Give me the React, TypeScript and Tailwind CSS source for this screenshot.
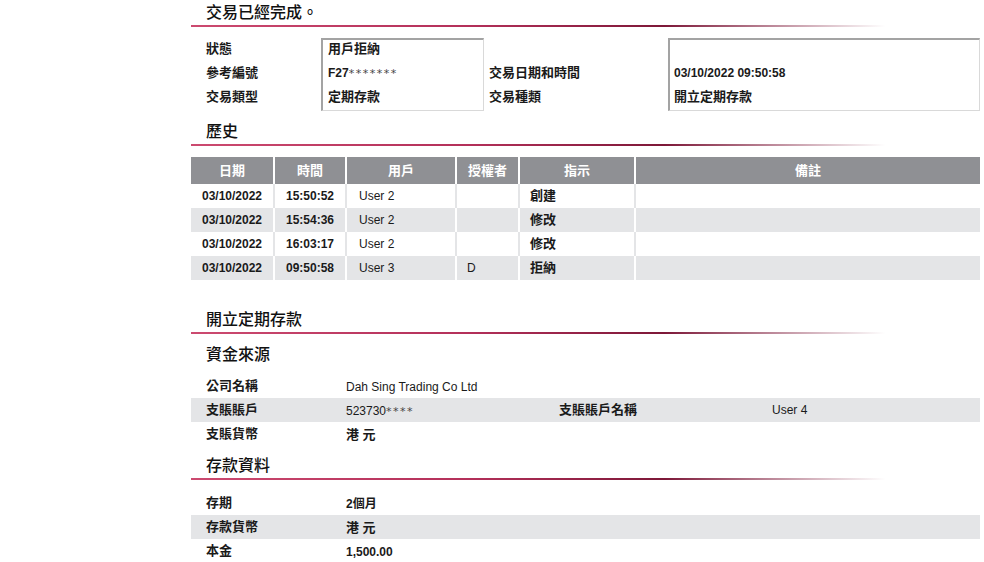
import React from "react";

const LINE =
  "h-[2px] bg-[linear-gradient(to_right,#cc4a70_0%,#b4305a_35%,#7d1838_60%,rgba(255,255,255,0)_88%)]";

function SectionTitle({ title, className = "" }: { title: string; className?: string }) {
  return (
    <div className={className}>
      <div className="flex h-[25px] items-center pl-[15px] text-[16px] font-medium text-[#111]">{title}</div>
      <div className={LINE} />
    </div>
  );
}

function Stars({ n }: { n: number }) {
  return (
    <span className="font-['DejaVu_Sans',sans-serif] text-[11px] font-normal tracking-[1.5px] text-[#444]">
      {"*".repeat(n)}
    </span>
  );
}

// one line inside the summary block
function InfoRow({ children, className = "" }: { children?: React.ReactNode; className?: string }) {
  return <div className={`h-[24px] pt-[2px] leading-[14px] whitespace-nowrap ${className}`}>{children}</div>;
}

const history = [
  { date: "03/10/2022", time: "15:50:52", user: "User 2", auth: "", action: "創建" },
  { date: "03/10/2022", time: "15:54:36", user: "User 2", auth: "", action: "修改" },
  { date: "03/10/2022", time: "16:03:17", user: "User 2", auth: "", action: "修改" },
  { date: "03/10/2022", time: "09:50:58", user: "User 3", auth: "D", action: "拒納" },
];

const headers = [
  { label: "日期", w: "w-[82px]" },
  { label: "時間", w: "w-[70px]" },
  { label: "用戶", w: "w-[108px]" },
  { label: "授權者", w: "w-[61px]" },
  { label: "指示", w: "w-[114px]" },
  { label: "備註", w: "flex-1" },
];

function DetailRow({
  label,
  value,
  label2,
  value2,
  shaded,
}: {
  label: string;
  value: React.ReactNode;
  label2?: string;
  value2?: React.ReactNode;
  shaded?: boolean;
}) {
  return (
    <div className={`flex h-[24px] items-center whitespace-nowrap ${shaded ? "bg-[#e4e5e7]" : ""}`}>
      <div className="w-[155px] pl-[15px] text-[13px] font-bold">{label}</div>
      <div className="w-[213px]">{value}</div>
      <div className="w-[213px] text-[13px] font-bold">{label2}</div>
      <div className="flex-1 text-[12px]">{value2}</div>
    </div>
  );
}

export default function App() {
  return (
    <div className="min-h-screen bg-white pl-[191px] font-['Liberation_Sans','Noto_Sans_CJK_TC',sans-serif] text-[#1a1a1a]">
      <div className="w-[789px]">
        <SectionTitle title="交易已經完成。" />

        {/* summary */}
        <div className="mt-[11px] flex h-[73px]">
          <div className="w-[130px] pt-[2px] pl-[15px] text-[13px] font-bold">
            <InfoRow>狀態</InfoRow>
            <InfoRow>參考編號</InfoRow>
            <InfoRow>交易類型</InfoRow>
          </div>
          <div className="w-[163px] overflow-hidden border-t-2 border-l-2 border-r border-b border-t-[#a3a3a3] border-l-[#a3a3a3] border-r-[#d9d9d9] border-b-[#d9d9d9] pl-[5px] font-bold">
            <InfoRow className="text-[13px]">用戶拒納</InfoRow>
            <InfoRow className="text-[12px]">
              F27<Stars n={7} />
            </InfoRow>
            <InfoRow className="text-[13px]">定期存款</InfoRow>
          </div>
          <div className="w-[184px] pt-[2px] pl-[5px] text-[13px] font-bold">
            <InfoRow />
            <InfoRow>交易日期和時間</InfoRow>
            <InfoRow>交易種類</InfoRow>
          </div>
          <div className="flex-1 overflow-hidden border-t-2 border-l-2 border-r border-b border-t-[#a3a3a3] border-l-[#a3a3a3] border-r-[#d9d9d9] border-b-[#d9d9d9] pl-[4px] font-bold">
            <InfoRow />
            <InfoRow className="text-[12px]">03/10/2022 09:50:58</InfoRow>
            <InfoRow className="text-[13px]">開立定期存款</InfoRow>
          </div>
        </div>

        <SectionTitle title="歷史" className="mt-[8px]" />

        {/* history table */}
        <div className="mt-[11px]">
          <div className="flex h-[27px] gap-[2px] bg-white">
            {headers.map((h) => (
              <div
                key={h.label}
                className={`${h.w} flex items-center justify-center bg-[#8f9094] text-[13px] font-bold text-white`}
              >
                {h.label}
              </div>
            ))}
          </div>
          {history.map((r, i) => {
            const shaded = i % 2 === 1;
            const cell = shaded ? "bg-[#e4e5e7]" : "bg-white";
            return (
              <div key={i} className={`flex h-[24px] gap-[2px] ${shaded ? "bg-white" : "bg-[#e4e5e7]"}`}>
                <div className={`w-[82px] ${cell} flex items-center justify-center text-[12px] font-bold`}>{r.date}</div>
                <div className={`w-[70px] ${cell} flex items-center justify-center text-[12px] font-bold`}>{r.time}</div>
                <div className={`w-[108px] ${cell} flex items-center pl-[12px] text-[12px]`}>{r.user}</div>
                <div className={`w-[61px] ${cell} flex items-center pl-[10px] text-[12px]`}>{r.auth}</div>
                <div className={`w-[114px] ${cell} flex items-center pl-[10px] text-[13px] font-bold`}>{r.action}</div>
                <div className={`flex-1 ${cell}`} />
              </div>
            );
          })}
        </div>

        <SectionTitle title="開立定期存款" className="mt-[27px]" />

        <div className="flex h-[40px] items-center pt-[2px] pl-[15px] text-[16px] font-medium text-[#111]">資金來源</div>
        <DetailRow label="公司名稱" value={<span className="text-[12px]">Dah Sing Trading Co Ltd</span>} />
        <DetailRow
          shaded
          label="支賬賬戶"
          value={
            <span className="text-[12px]">
              523730<Stars n={4} />
            </span>
          }
          label2="支賬賬戶名稱"
          value2="User 4"
        />
        <DetailRow label="支賬貨幣" value={<span className="text-[13px] font-bold">港 元</span>} />

        <SectionTitle title="存款資料" className="mt-[7px]" />
        <div className="mt-[11px]">
          <DetailRow label="存期" value={<span className="text-[12px] font-bold">2個月</span>} />
          <DetailRow shaded label="存款貨幣" value={<span className="text-[13px] font-bold">港 元</span>} />
          <DetailRow label="本金" value={<span className="text-[12px] font-bold">1,500.00</span>} />
        </div>
      </div>
    </div>
  );
}
